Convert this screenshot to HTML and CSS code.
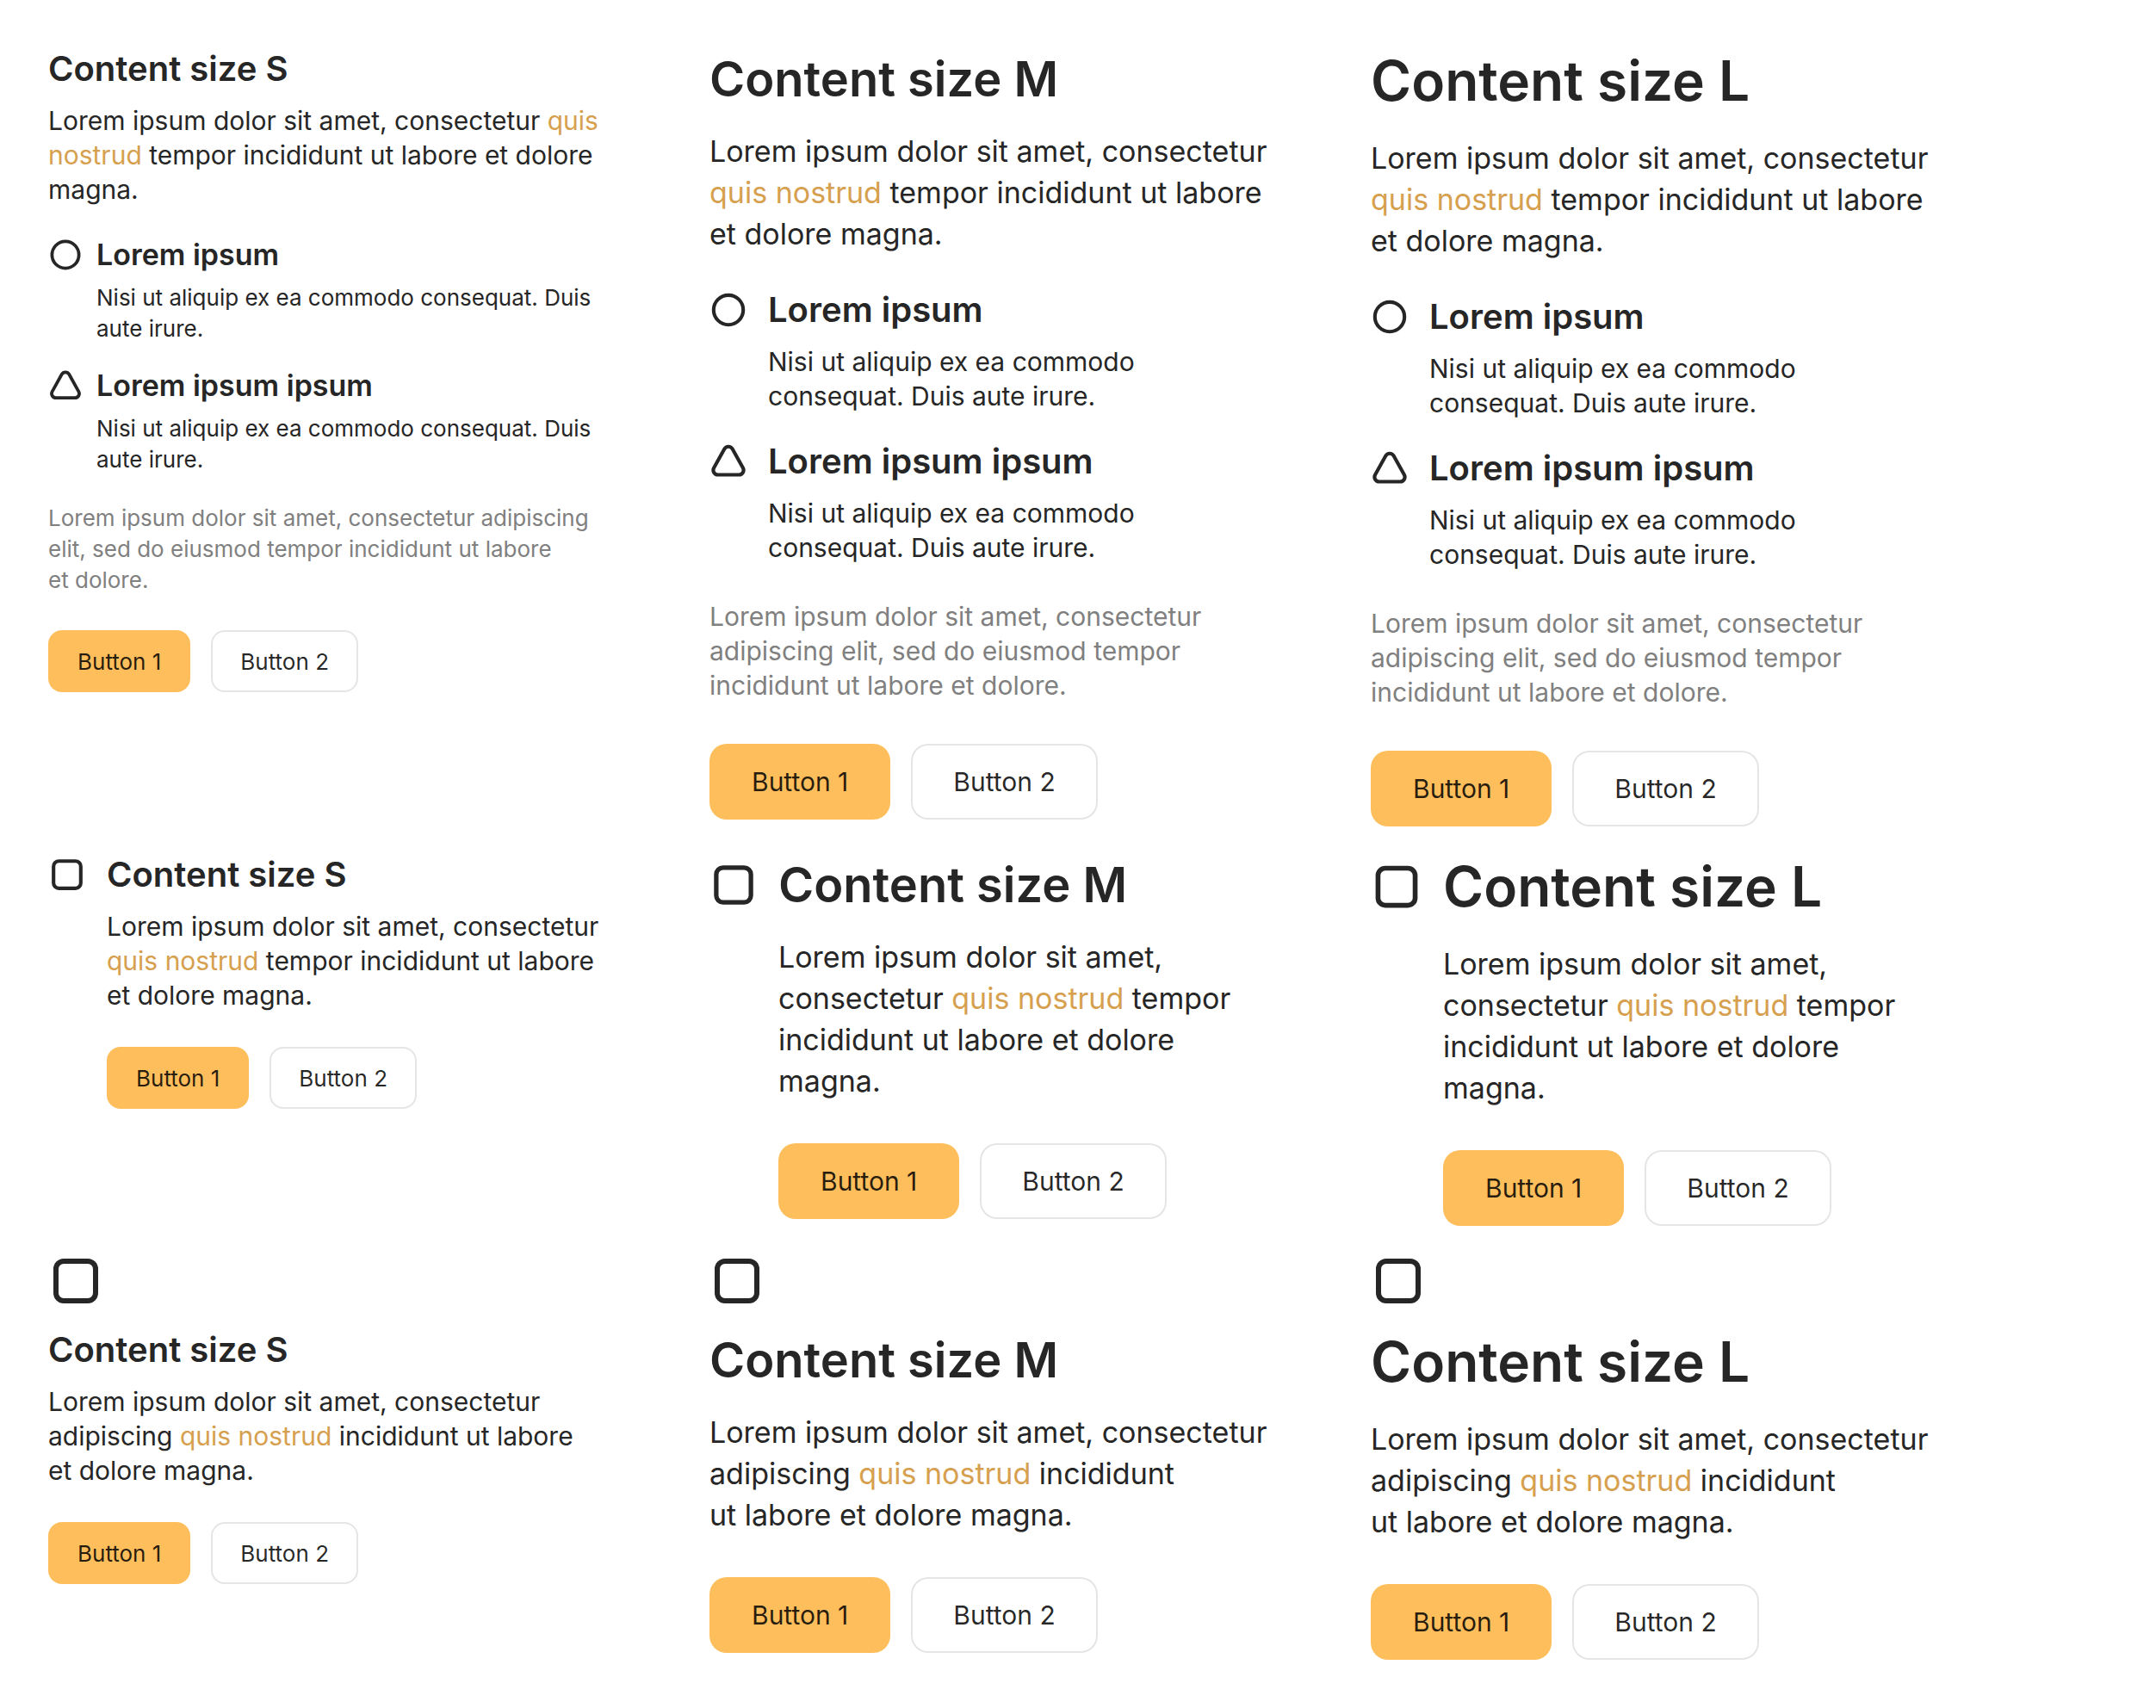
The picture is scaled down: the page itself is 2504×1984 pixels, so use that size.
FILE: index.html
```html
<!DOCTYPE html>
<html lang="en">
<head>
<meta charset="utf-8">
<meta name="viewport" content="width=device-width, initial-scale=1">
<title>Content sizes</title>
<link rel="stylesheet" href="styles.css">
</head>
<body>
<svg class="sprite" aria-hidden="true">
  <symbol id="circle" viewBox="0 0 16 16"><circle cx="8" cy="8" r="6.25" fill="none" stroke="currentColor" stroke-width="1.5"/></symbol>
  <symbol id="square" viewBox="0 0 16 16"><rect x="2.25" y="2.25" width="11.5" height="11.5" rx="2.25" fill="none" stroke="currentColor" stroke-width="1.5"/></symbol>
  <symbol id="triangle" viewBox="0 0 16 16"><path d="M6.3 2.7a1.95 1.95 0 0 1 3.4 0l4.45 8.05a1.95 1.95 0 0 1-1.7 2.9h-8.9a1.95 1.95 0 0 1-1.7-2.9z" fill="none" stroke="currentColor" stroke-width="1.5" stroke-linejoin="round"/></symbol>
</svg>
<main class="grid">
  <section class="content content-s">
    <h2 class="title">Content size S</h2>
    <p class="text">Lorem ipsum dolor sit amet, consectetur <a class="link" href="#">quis nostrud</a> tempor incididunt ut&nbsp;labore et&nbsp;dolore magna.</p>
    <ul class="list">
      <li class="item">
        <svg class="item-icon" aria-hidden="true"><use href="#circle"/></svg>
        <div class="item-body"><h3 class="item-title">Lorem ipsum</h3><p class="item-text">Nisi ut aliquip ex ea commodo consequat. Duis aute irure.</p></div>
      </li>
      <li class="item">
        <svg class="item-icon" aria-hidden="true"><use href="#triangle"/></svg>
        <div class="item-body"><h3 class="item-title">Lorem ipsum ipsum</h3><p class="item-text">Nisi ut aliquip ex ea commodo consequat. Duis aute irure.</p></div>
      </li>
    </ul>
    <p class="note">Lorem ipsum dolor sit amet, consectetur adipiscing elit, sed do eiusmod tempor incididunt ut&nbsp;labore et&nbsp;dolore.</p>
    <div class="buttons"><button class="button button-action" type="button">Button 1</button><button class="button button-outlined" type="button">Button 2</button></div>
  </section>

  <section class="content content-m">
    <h2 class="title">Content size M</h2>
    <p class="text">Lorem ipsum dolor sit amet, consectetur <a class="link" href="#">quis nostrud</a> tempor incididunt ut&nbsp;labore et&nbsp;dolore magna.</p>
    <ul class="list">
      <li class="item">
        <svg class="item-icon" aria-hidden="true"><use href="#circle"/></svg>
        <div class="item-body"><h3 class="item-title">Lorem ipsum</h3><p class="item-text">Nisi ut aliquip ex ea commodo consequat. Duis aute irure.</p></div>
      </li>
      <li class="item">
        <svg class="item-icon" aria-hidden="true"><use href="#triangle"/></svg>
        <div class="item-body"><h3 class="item-title">Lorem ipsum ipsum</h3><p class="item-text">Nisi ut aliquip ex ea commodo consequat. Duis aute irure.</p></div>
      </li>
    </ul>
    <p class="note">Lorem ipsum dolor sit amet, consectetur adipiscing elit, sed do eiusmod tempor incididunt ut&nbsp;labore et&nbsp;dolore.</p>
    <div class="buttons"><button class="button button-action" type="button">Button 1</button><button class="button button-outlined" type="button">Button 2</button></div>
  </section>

  <section class="content content-l">
    <h2 class="title">Content size L</h2>
    <p class="text">Lorem ipsum dolor sit amet, consectetur <a class="link" href="#">quis nostrud</a> tempor incididunt ut&nbsp;labore et&nbsp;dolore magna.</p>
    <ul class="list">
      <li class="item">
        <svg class="item-icon" aria-hidden="true"><use href="#circle"/></svg>
        <div class="item-body"><h3 class="item-title">Lorem ipsum</h3><p class="item-text">Nisi ut aliquip ex ea commodo consequat. Duis aute irure.</p></div>
      </li>
      <li class="item">
        <svg class="item-icon" aria-hidden="true"><use href="#triangle"/></svg>
        <div class="item-body"><h3 class="item-title">Lorem ipsum ipsum</h3><p class="item-text">Nisi ut aliquip ex ea commodo consequat. Duis aute irure.</p></div>
      </li>
    </ul>
    <p class="note">Lorem ipsum dolor sit amet, consectetur adipiscing elit, sed do eiusmod tempor incididunt ut&nbsp;labore et&nbsp;dolore.</p>
    <div class="buttons"><button class="button button-action" type="button">Button 1</button><button class="button button-outlined" type="button">Button 2</button></div>
  </section>

  <section class="content content-s content-side">
    <div class="icon-box"><svg class="icon" aria-hidden="true"><use href="#square"/></svg></div>
    <div class="body">
      <h2 class="title">Content size S</h2>
      <p class="text">Lorem ipsum dolor sit amet, consectetur <a class="link" href="#">quis nostrud</a> tempor incididunt ut&nbsp;labore et&nbsp;dolore magna.</p>
      <div class="buttons"><button class="button button-action" type="button">Button 1</button><button class="button button-outlined" type="button">Button 2</button></div>
    </div>
  </section>

  <section class="content content-m content-side">
    <div class="icon-box"><svg class="icon" aria-hidden="true"><use href="#square"/></svg></div>
    <div class="body">
      <h2 class="title">Content size M</h2>
      <p class="text">Lorem ipsum dolor sit amet, consectetur <a class="link" href="#">quis nostrud</a> tempor incididunt ut&nbsp;labore et&nbsp;dolore magna.</p>
      <div class="buttons"><button class="button button-action" type="button">Button 1</button><button class="button button-outlined" type="button">Button 2</button></div>
    </div>
  </section>

  <section class="content content-l content-side">
    <div class="icon-box"><svg class="icon" aria-hidden="true"><use href="#square"/></svg></div>
    <div class="body">
      <h2 class="title">Content size L</h2>
      <p class="text">Lorem ipsum dolor sit amet, consectetur <a class="link" href="#">quis nostrud</a> tempor incididunt ut&nbsp;labore et&nbsp;dolore magna.</p>
      <div class="buttons"><button class="button button-action" type="button">Button 1</button><button class="button button-outlined" type="button">Button 2</button></div>
    </div>
  </section>

  <section class="content content-s">
    <svg class="icon-top" aria-hidden="true"><use href="#square"/></svg>
    <h2 class="title">Content size S</h2>
    <p class="text">Lorem ipsum dolor sit amet, consectetur adipiscing <a class="link" href="#">quis nostrud</a> incididunt ut&nbsp;labore et&nbsp;dolore magna.</p>
    <div class="buttons"><button class="button button-action" type="button">Button 1</button><button class="button button-outlined" type="button">Button 2</button></div>
  </section>

  <section class="content content-m">
    <svg class="icon-top" aria-hidden="true"><use href="#square"/></svg>
    <h2 class="title">Content size M</h2>
    <p class="text">Lorem ipsum dolor sit amet, consectetur adipiscing <a class="link" href="#">quis nostrud</a> incididunt ut&nbsp;labore et&nbsp;dolore magna.</p>
    <div class="buttons"><button class="button button-action" type="button">Button 1</button><button class="button button-outlined" type="button">Button 2</button></div>
  </section>

  <section class="content content-l">
    <svg class="icon-top" aria-hidden="true"><use href="#square"/></svg>
    <h2 class="title">Content size L</h2>
    <p class="text">Lorem ipsum dolor sit amet, consectetur adipiscing <a class="link" href="#">quis nostrud</a> incididunt ut&nbsp;labore et&nbsp;dolore magna.</p>
    <div class="buttons"><button class="button button-action" type="button">Button 1</button><button class="button button-outlined" type="button">Button 2</button></div>
  </section>
</main>
</body>
</html>
```
FILE: styles.css
```css
* { box-sizing: border-box; }

body {
  margin: 0;
  background: #fff;
  color: #262626;
  font-family: Inter, "Liberation Sans", sans-serif;
}

h2, h3, p, ul { margin: 0; padding: 0; }

.sprite { display: none; }

.grid {
  display: grid;
  grid-template-columns: repeat(3, 1fr);
  row-gap: 32px;
  padding: 56px 160px 56px 40px;
}

/* Size tokens */
.content-s {
  --title-size: 40px;
  --title-line: 48px;
  --title-gap: 16px;
  --text-size: 30px;
  --text-line: 40px;
  --list-gap: 32px;
  --item-title-size: 34px;
  --item-icon: 40px;
  --item-icon-gap: 16px;
  --item-text-gap: 8px;
  --item-gap: 24px;
  --small-size: 26px;
  --small-line: 36px;
  --buttons-gap: 40px;
  --button-height: 72px;
  --button-padding: 34px;
  --button-radius: 16px;
  --icon: 44px;
}

.content-m,
.content-l {
  --title-size: 56px;
  --title-line: 72px;
  --title-gap: 24px;
  --text-size: 34px;
  --text-line: 48px;
  --list-gap: 40px;
  --item-title-size: 40px;
  --item-icon: 44px;
  --item-icon-gap: 24px;
  --item-text-gap: 16px;
  --item-gap: 32px;
  --small-size: 30px;
  --small-line: 40px;
  --buttons-gap: 48px;
  --button-height: 88px;
  --button-padding: 49px;
  --button-radius: 20px;
  --icon: 56px;
}

.content-l {
  --title-size: 64px;
  --title-line: 76px;
  --title-gap: 28px;
  --icon: 60px;
}

.content {
  max-width: 688px;
  padding: 0 16px;
}

.content-side {
  display: flex;
  gap: 24px;
}

.icon-box {
  display: flex;
  flex: none;
  align-items: center;
  height: var(--title-line);
}

.icon { width: var(--icon); height: var(--icon); }

.icon-top {
  display: block;
  width: 64px;
  height: 64px;
  margin-bottom: 24px;
}

.body { flex: 1; min-width: 0; }

.title {
  font-size: var(--title-size);
  line-height: var(--title-line);
  font-weight: 600;
  margin-bottom: var(--title-gap);
}

.text {
  font-size: var(--text-size);
  line-height: var(--text-line);
}

.link { color: #d6a04f; text-decoration: none; }

.list {
  display: flex;
  flex-direction: column;
  gap: var(--item-gap);
  margin: var(--list-gap) 0;
  list-style: none;
}

.item {
  display: flex;
  gap: var(--item-icon-gap);
}

.item-icon {
  flex: none;
  width: var(--item-icon);
  height: 48px;
}

.item-body { flex: 1; min-width: 0; }

.item-title {
  font-size: var(--item-title-size);
  line-height: 48px;
  font-weight: 600;
  margin-bottom: var(--item-text-gap);
}

.item-text,
.note {
  font-size: var(--small-size);
  line-height: var(--small-line);
}

.note { color: #808080; }

.buttons {
  display: flex;
  gap: 24px;
  margin-top: var(--buttons-gap);
}

.button {
  height: var(--button-height);
  padding: 0 var(--button-padding);
  border: 0;
  border-radius: var(--button-radius);
  color: rgba(0, 0, 0, 0.85);
  font-family: inherit;
  font-size: var(--small-size);
  cursor: pointer;
}

.button-action { background: #ffbe5c; }

.button-outlined {
  background: #fff;
  box-shadow: inset 0 0 0 2px #e5e5e5;
}
```
